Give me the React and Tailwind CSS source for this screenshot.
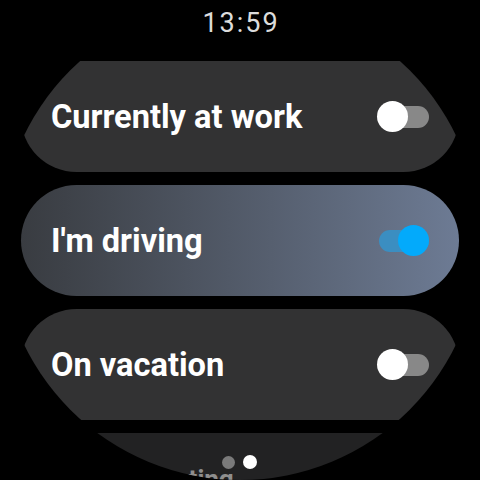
import React from "react";

function Toggle({ on }) {
  return (
    <div className="relative w-[52px] h-[31px] flex items-center justify-end shrink-0">
      <div
        className={
          "h-[22px] w-[50px] rounded-full " +
          (on ? "bg-[#3b8ec1]" : "bg-[#888888]")
        }
      />
      <div
        className={
          "absolute top-0 w-[31px] h-[31px] rounded-full " +
          (on ? "right-0 bg-[#03aafb]" : "left-0 bg-white")
        }
      />
    </div>
  );
}

function Chip({ label, on, active }) {
  return (
    <div
      className={
        "h-[111px] rounded-full flex items-center justify-between pl-[30px] pr-[30px] shrink-0 " +
        (active
          ? "bg-gradient-to-r from-[#393c41] to-[#6d7b94]"
          : "bg-[#323233]")
      }
    >
      <span className="text-white font-bold text-[32.6px] leading-none pt-[1px]">{label}</span>
      <Toggle on={on} />
    </div>
  );
}

export default function App() {
  return (
    <div
      className="relative w-[480px] h-[480px] bg-black overflow-hidden"
      style={{ fontFamily: "Roboto, 'Noto Sans', sans-serif" }}
    >
      <div className="absolute inset-0 rounded-full overflow-hidden flex flex-col">
        <div className="h-[61px] shrink-0 flex justify-center pt-[9px]">
          <span className="text-[#dcdcdc] text-[27px] leading-[28px] tracking-[2px] pl-[2px]">13:59</span>
        </div>
        <div className="flex flex-col gap-[13px] px-[21px]">
          <Chip label="Currently at work" on={false} />
          <Chip label="I'm driving" on={true} active />
          <Chip label="On vacation" on={false} />
          <div className="h-[111px] rounded-full bg-[#222223] shrink-0 pl-[68px] pt-[33px]">
            <span className="text-[#8e8e8e] font-bold text-[26px] leading-none">In a meeting</span>
          </div>
        </div>
      </div>
      <div className="absolute left-0 right-0 bottom-[11px] flex justify-center items-center gap-[8px] pr-[1px]">
        <div className="w-[13px] h-[13px] rounded-full bg-[#7a7a7a]" />
        <div className="w-[14px] h-[14px] rounded-full bg-white" />
      </div>
    </div>
  );
}
